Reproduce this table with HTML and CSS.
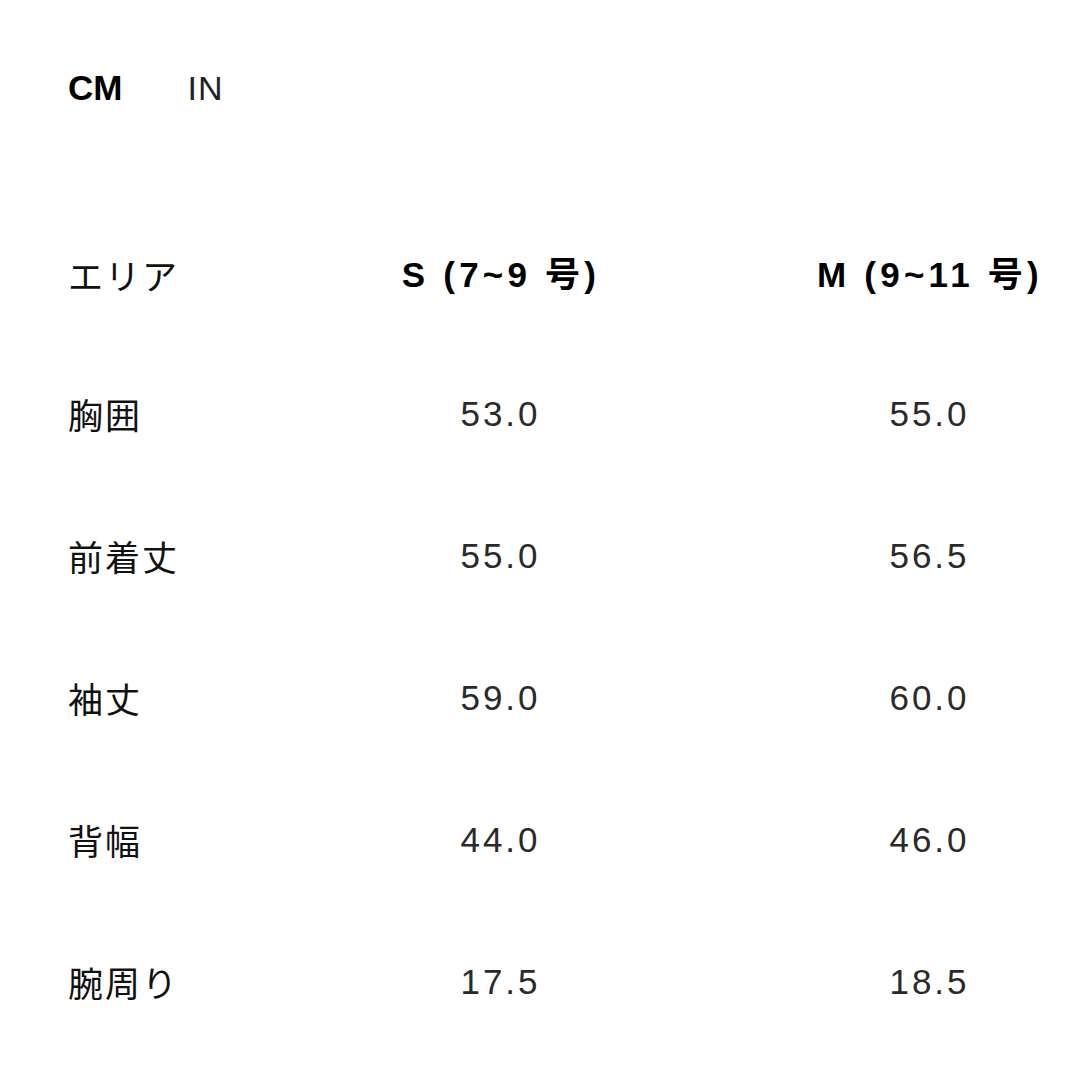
FILE: index.html
```html
<!DOCTYPE html>
<html lang="ja">
<head>
<meta charset="utf-8">
<title>サイズ表</title>
<link rel="stylesheet" href="styles.css">
</head>
<body>
<div class="page">
  <div class="units">
    <span class="unit unit-active">CM</span>
    <span class="unit">IN</span>
  </div>
  <div class="table">
    <div class="row row-head">
      <div class="cell cell-label">エリア</div>
      <div class="cell cell-val head">S (7~9 号)</div>
      <div class="cell cell-val head">M (9~11 号)</div>
    </div>
    <div class="row">
      <div class="cell cell-label">胸囲</div>
      <div class="cell cell-val">53.0</div>
      <div class="cell cell-val">55.0</div>
    </div>
    <div class="row">
      <div class="cell cell-label">前着丈</div>
      <div class="cell cell-val">55.0</div>
      <div class="cell cell-val">56.5</div>
    </div>
    <div class="row">
      <div class="cell cell-label">袖丈</div>
      <div class="cell cell-val">59.0</div>
      <div class="cell cell-val">60.0</div>
    </div>
    <div class="row">
      <div class="cell cell-label">背幅</div>
      <div class="cell cell-val">44.0</div>
      <div class="cell cell-val">46.0</div>
    </div>
    <div class="row">
      <div class="cell cell-label">腕周り</div>
      <div class="cell cell-val">17.5</div>
      <div class="cell cell-val">18.5</div>
    </div>
  </div>
</div>
</body>
</html>
```
FILE: styles.css
```css
html, body {
  margin: 0;
  padding: 0;
  background: #ffffff;
}

body {
  font-family: "Liberation Sans", "Noto Sans CJK JP", sans-serif;
  color: #111111;
}

.page {
  width: 1080px;
  height: 1080px;
  padding: 68px 0 0 68px;
  box-sizing: border-box;
}

.units {
  display: flex;
  align-items: center;
  gap: 65px;
  height: 40px;
  margin-bottom: 99px;
}

.unit {
  font-size: 34px;
  line-height: 40px;
  font-weight: 400;
  letter-spacing: 1px;
  color: #222222;
}

.unit-active {
  font-size: 35px;
  font-weight: 700;
  letter-spacing: 0;
  color: #000000;
}

.table {
  display: flex;
  flex-direction: column;
}

.row {
  display: grid;
  grid-template-columns: 154px 300px 304px;
  column-gap: 127px;
  align-items: center;
  height: 142px;
}

.row-head {
  height: 136px;
}

.cell {
  font-size: 35px;
  line-height: 40px;
  white-space: nowrap;
}

.cell-label {
  font-family: "Noto Sans CJK JP", sans-serif;
  letter-spacing: 2px;
  color: #111111;
}

.cell-val {
  text-align: center;
  letter-spacing: 3px;
  padding-left: 3px;
  color: #2a2a2a;
}

.head {
  font-weight: 700;
  color: #000000;
  letter-spacing: 4.2px;
  padding-left: 4px;
}
```
